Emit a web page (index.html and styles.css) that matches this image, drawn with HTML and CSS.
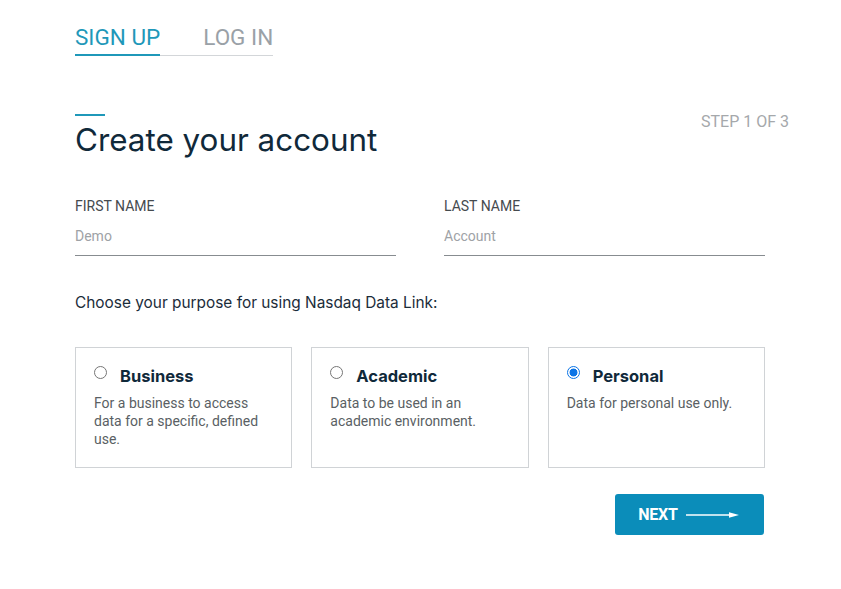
FILE: index.html
```html
<!DOCTYPE html>
<html>
<head>
<meta charset="utf-8">
<link rel="stylesheet" href="styles.css">
</head>
<body>
<div class="page">
  <nav class="tabs">
    <a class="tab active">SIGN UP</a>
    <a class="tab">LOG IN</a>
  </nav>

  <div class="head">
    <div class="title-block">
      <div class="accent"></div>
      <h1>Create your account</h1>
    </div>
    <div class="step">STEP 1 OF 3</div>
  </div>

  <div class="fields">
    <div class="field">
      <label>FIRST NAME</label>
      <div class="input">Demo</div>
    </div>
    <div class="field">
      <label>LAST NAME</label>
      <div class="input">Account</div>
    </div>
  </div>

  <p class="purpose">Choose your purpose for using Nasdaq Data Link:</p>

  <div class="cards">
    <div class="card">
      <div class="card-title"><span class="radio"></span><span>Business</span></div>
      <p>For a business to access data for a specific, defined use.</p>
    </div>
    <div class="card">
      <div class="card-title"><span class="radio"></span><span>Academic</span></div>
      <p>Data to be used in an academic environment.</p>
    </div>
    <div class="card">
      <div class="card-title"><span class="radio checked"></span><span>Personal</span></div>
      <p>Data for personal use only.</p>
    </div>
  </div>

  <div class="actions">
    <button class="next">NEXT
      <svg width="53" height="8" viewBox="0 0 53 8"><line x1="0" y1="4" x2="45" y2="4" stroke="#fff" stroke-width="1.3"/><path d="M43 1.3 L53 4 L43 6.7 Z" fill="#fff"/></svg>
    </button>
  </div>
</div>
</body>
</html>
```

FILE: styles.css
```css
* { box-sizing: border-box; }
body {
  margin: 0;
  background: #fff;
  font-family: Roboto, "Liberation Sans", sans-serif;
}
.page {
  width: 690px;
  margin-left: 75px;
  padding-top: 24px;
}
.tabs {
  display: inline-flex;
  gap: 43px;
  border-bottom: 1px solid #d3d6d9;
}
.tab {
  font-size: 22.5px;
  color: #9aa1a7;
  padding-bottom: 4px;
  line-height: 26px;
  margin-bottom: -1px;
  border-bottom: 2px solid transparent;
}
.tab.active {
  color: #1f98b9;
  border-bottom-color: #1f98b9;
}
.head {
  display: flex;
  justify-content: space-between;
  align-items: flex-start;
  margin-top: 58px;
  margin-right: -24px;
}
.accent {
  width: 30px;
  height: 2px;
  background: #1f98b9;
}
h1 {
  margin: 6px 0 0;
  font-family: Inter, "Noto Sans", sans-serif;
  font-weight: 400;
  font-size: 31.4px;
  line-height: 36px;
  color: #10293a;
}
.step {
  margin-top: 1px;
  font-size: 16px;
  color: #a5a8ab;
  line-height: 14px;
}
.fields {
  display: grid;
  grid-template-columns: 321px 321px;
  column-gap: 48px;
  margin-top: 39px;
}
.field label {
  display: block;
  font-size: 14px;
  color: #454a4e;
  line-height: 18px;
}
.input {
  font-size: 14px;
  color: #9ea2a6;
  line-height: 18px;
  margin-top: 12px;
  padding-bottom: 10px;
  border-bottom: 1px solid #878c90;
}
.purpose {
  margin: 37px 0 0;
  font-family: Inter, "Noto Sans", sans-serif;
  font-size: 15.4px;
  line-height: 20px;
  color: #1b2c3a;
}
.cards {
  display: grid;
  grid-template-columns: repeat(3, 1fr);
  gap: 19px;
  margin-top: 34px;
}
.card {
  border: 1px solid #d0d3d6;
  height: 121px;
  padding: 18px 18px 0 18px;
}
.card-title {
  display: flex;
  align-items: center;
  gap: 13px;
  font-family: Inter, "Noto Sans", sans-serif;
  font-weight: 700;
  font-size: 16.5px;
  color: #10293a;
  line-height: 20px;
}
.radio {
  width: 13px;
  height: 13px;
  border-radius: 50%;
  border: 1px solid #767676;
  background: #fff;
  margin-top: -7px;
  flex: none;
}
.radio.checked {
  border: 1px solid #0b74e6;
  background: radial-gradient(circle, #0b74e6 0 3.6px, #fff 4.3px);
}
.card p {
  margin: 8px 0 0;
  font-size: 14px;
  line-height: 18px;
  color: #5a5f64;
}
.actions {
  display: flex;
  justify-content: flex-end;
  margin-top: 26px;
  margin-right: 1px;
}
.next {
  width: 149px;
  height: 41px;
  border: none;
  border-radius: 3px;
  background: #0b8dba;
  color: #fff;
  font-family: Roboto, "Liberation Sans", sans-serif;
  font-weight: 700;
  font-size: 16px;
  letter-spacing: -0.2px;
  display: flex;
  align-items: center;
  justify-content: center;
  gap: 8px;
  padding: 0 2px 0 0;
}
```
